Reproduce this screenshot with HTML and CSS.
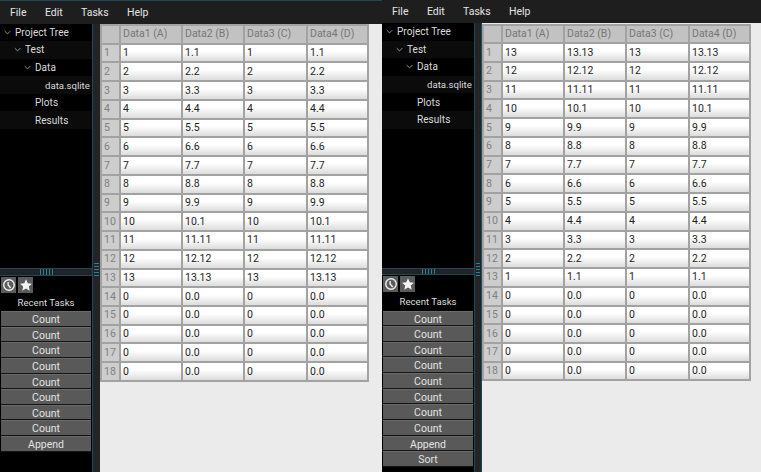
FILE: index.html
```html
<!DOCTYPE html>
<html lang="en">
<head>
<meta charset="utf-8">
<title>Tasks</title>
<link rel="stylesheet" href="styles.css">
</head>
<body>
<div class="desktop">
  <section class="win win-a">
    <nav class="menu"><span>File</span><span>Edit</span><span>Tasks</span><span>Help</span></nav>
    <div class="body">
      <aside class="side">
        <ul class="tree">
          <li class="l0"><svg class="chev" viewBox="0 0 10 6"><path d="M1 1l4 4 4-4"/></svg>Project Tree</li>
          <li class="l1 alt"><svg class="chev" viewBox="0 0 10 6"><path d="M1 1l4 4 4-4"/></svg>Test</li>
          <li class="l2"><svg class="chev" viewBox="0 0 10 6"><path d="M1 1l4 4 4-4"/></svg>Data</li>
          <li class="l3 alt">data.sqlite</li>
          <li class="l4">Plots</li>
          <li class="l4 alt">Results</li>
        </ul>
        <div class="hsplit"><i></i><i></i><i></i><i></i><i></i></div>
        <div class="tabs">
          <span class="tab"><svg viewBox="0 0 16 16"><circle cx="8" cy="8" r="6"/><path d="M7 4.5V8l3 3.5"/></svg></span>
          <span class="tab"><svg viewBox="0 0 16 16"><path class="fill" d="M8 1.5l2 4.500 4.800.5-3.600 3.200 1 4.800L8 12.100 3.800 14.500l1-4.800L1.200 6.500 6 6z"/></svg></span>
        </div>
        <h2 class="recent">Recent Tasks</h2>
        <div class="tasks">
          <button>Count</button><button>Count</button><button>Count</button><button>Count</button><button>Count</button><button>Count</button><button>Count</button><button>Count</button><button>Append</button>
        </div>
      </aside>
      <div class="vsplit"><i></i><i></i><i></i><i></i><i></i></div>
      <div class="sheet">
        <div class="grid">
          <div class="corner"></div><div class="ch">Data1 (A)</div><div class="ch">Data2 (B)</div><div class="ch">Data3 (C)</div><div class="ch">Data4 (D)</div>
          <div class="rh">1</div><div class="c">1</div><div class="c">1.1</div><div class="c">1</div><div class="c">1.1</div>
          <div class="rh">2</div><div class="c">2</div><div class="c">2.2</div><div class="c">2</div><div class="c">2.2</div>
          <div class="rh">3</div><div class="c">3</div><div class="c">3.3</div><div class="c">3</div><div class="c">3.3</div>
          <div class="rh">4</div><div class="c">4</div><div class="c">4.4</div><div class="c">4</div><div class="c">4.4</div>
          <div class="rh">5</div><div class="c">5</div><div class="c">5.5</div><div class="c">5</div><div class="c">5.5</div>
          <div class="rh">6</div><div class="c">6</div><div class="c">6.6</div><div class="c">6</div><div class="c">6.6</div>
          <div class="rh">7</div><div class="c">7</div><div class="c">7.7</div><div class="c">7</div><div class="c">7.7</div>
          <div class="rh">8</div><div class="c">8</div><div class="c">8.8</div><div class="c">8</div><div class="c">8.8</div>
          <div class="rh">9</div><div class="c">9</div><div class="c">9.9</div><div class="c">9</div><div class="c">9.9</div>
          <div class="rh">10</div><div class="c">10</div><div class="c">10.1</div><div class="c">10</div><div class="c">10.1</div>
          <div class="rh">11</div><div class="c">11</div><div class="c">11.11</div><div class="c">11</div><div class="c">11.11</div>
          <div class="rh">12</div><div class="c">12</div><div class="c">12.12</div><div class="c">12</div><div class="c">12.12</div>
          <div class="rh">13</div><div class="c">13</div><div class="c">13.13</div><div class="c">13</div><div class="c">13.13</div>
          <div class="rh">14</div><div class="c">0</div><div class="c">0.0</div><div class="c">0</div><div class="c">0.0</div>
          <div class="rh">15</div><div class="c">0</div><div class="c">0.0</div><div class="c">0</div><div class="c">0.0</div>
          <div class="rh">16</div><div class="c">0</div><div class="c">0.0</div><div class="c">0</div><div class="c">0.0</div>
          <div class="rh">17</div><div class="c">0</div><div class="c">0.0</div><div class="c">0</div><div class="c">0.0</div>
          <div class="rh">18</div><div class="c">0</div><div class="c">0.0</div><div class="c">0</div><div class="c">0.0</div>
        </div>
      </div>
    </div>
  </section>
  <section class="win win-b">
    <nav class="menu"><span>File</span><span>Edit</span><span>Tasks</span><span>Help</span></nav>
    <div class="body">
      <aside class="side">
        <ul class="tree">
          <li class="l0"><svg class="chev" viewBox="0 0 10 6"><path d="M1 1l4 4 4-4"/></svg>Project Tree</li>
          <li class="l1 alt"><svg class="chev" viewBox="0 0 10 6"><path d="M1 1l4 4 4-4"/></svg>Test</li>
          <li class="l2"><svg class="chev" viewBox="0 0 10 6"><path d="M1 1l4 4 4-4"/></svg>Data</li>
          <li class="l3 alt">data.sqlite</li>
          <li class="l4">Plots</li>
          <li class="l4 alt">Results</li>
        </ul>
        <div class="hsplit"><i></i><i></i><i></i><i></i><i></i></div>
        <div class="tabs">
          <span class="tab"><svg viewBox="0 0 16 16"><circle cx="8" cy="8" r="6"/><path d="M7 4.5V8l3 3.5"/></svg></span>
          <span class="tab"><svg viewBox="0 0 16 16"><path class="fill" d="M8 1.5l2 4.500 4.800.5-3.600 3.200 1 4.800L8 12.100 3.800 14.500l1-4.800L1.200 6.500 6 6z"/></svg></span>
        </div>
        <h2 class="recent">Recent Tasks</h2>
        <div class="tasks">
          <button>Count</button><button>Count</button><button>Count</button><button>Count</button><button>Count</button><button>Count</button><button>Count</button><button>Count</button><button>Append</button><button>Sort</button>
        </div>
      </aside>
      <div class="vsplit"><i></i><i></i><i></i><i></i><i></i></div>
      <div class="sheet">
        <div class="grid">
          <div class="corner"></div><div class="ch">Data1 (A)</div><div class="ch">Data2 (B)</div><div class="ch">Data3 (C)</div><div class="ch">Data4 (D)</div>
          <div class="rh">1</div><div class="c">13</div><div class="c">13.13</div><div class="c">13</div><div class="c">13.13</div>
          <div class="rh">2</div><div class="c">12</div><div class="c">12.12</div><div class="c">12</div><div class="c">12.12</div>
          <div class="rh">3</div><div class="c">11</div><div class="c">11.11</div><div class="c">11</div><div class="c">11.11</div>
          <div class="rh">4</div><div class="c">10</div><div class="c">10.1</div><div class="c">10</div><div class="c">10.1</div>
          <div class="rh">5</div><div class="c">9</div><div class="c">9.9</div><div class="c">9</div><div class="c">9.9</div>
          <div class="rh">6</div><div class="c">8</div><div class="c">8.8</div><div class="c">8</div><div class="c">8.8</div>
          <div class="rh">7</div><div class="c">7</div><div class="c">7.7</div><div class="c">7</div><div class="c">7.7</div>
          <div class="rh">8</div><div class="c">6</div><div class="c">6.6</div><div class="c">6</div><div class="c">6.6</div>
          <div class="rh">9</div><div class="c">5</div><div class="c">5.5</div><div class="c">5</div><div class="c">5.5</div>
          <div class="rh">10</div><div class="c">4</div><div class="c">4.4</div><div class="c">4</div><div class="c">4.4</div>
          <div class="rh">11</div><div class="c">3</div><div class="c">3.3</div><div class="c">3</div><div class="c">3.3</div>
          <div class="rh">12</div><div class="c">2</div><div class="c">2.2</div><div class="c">2</div><div class="c">2.2</div>
          <div class="rh">13</div><div class="c">1</div><div class="c">1.1</div><div class="c">1</div><div class="c">1.1</div>
          <div class="rh">14</div><div class="c">0</div><div class="c">0.0</div><div class="c">0</div><div class="c">0.0</div>
          <div class="rh">15</div><div class="c">0</div><div class="c">0.0</div><div class="c">0</div><div class="c">0.0</div>
          <div class="rh">16</div><div class="c">0</div><div class="c">0.0</div><div class="c">0</div><div class="c">0.0</div>
          <div class="rh">17</div><div class="c">0</div><div class="c">0.0</div><div class="c">0</div><div class="c">0.0</div>
          <div class="rh">18</div><div class="c">0</div><div class="c">0.0</div><div class="c">0</div><div class="c">0.0</div>
        </div>
      </div>
    </div>
  </section>
</div>
</body>
</html>
```
FILE: styles.css
```css
* { box-sizing: border-box; }
html, body { margin: 0; height: 100%; overflow: hidden; }
body { background: #ebebeb; font-family: Roboto, "Liberation Sans", sans-serif; font-size: 10.5px; }

.desktop { display: grid; grid-template-columns: 382px 379px; height: 472px; }
.win { display: flex; flex-direction: column; height: 472px; min-width: 0; }
.win-a { border-top: 1px solid #1d4756; }

.menu { height: 22.5px; flex: none; display: flex; align-items: center; padding-left: 10px; background: #1e1e1e; color: #e4e4e4; }
.menu span:nth-child(1) { width: 35px; }
.menu span:nth-child(2) { width: 36px; }
.menu span:nth-child(3) { width: 46px; }
.win-b .menu { height: 23px; }

.body { flex: 1; display: flex; min-height: 0; }

.side { width: 92px; flex: none; display: flex; flex-direction: column; background: #000; color: #dcdcdc; }
.tree { list-style: none; margin: 0; padding: 0; height: 244.5px; flex: none; font-size: 10px; letter-spacing: 0.05px; }
.tree li { height: 17.6px; display: flex; align-items: center; white-space: nowrap; }
.tree li.alt { background: #0b0b0b; }
.chev { width: 7px; height: 5px; margin-right: 4px; fill: none; stroke: #cfcfcf; stroke-width: 1; flex: none; }
.l0 { padding-left: 4px; }
.l1 { padding-left: 14px; }
.l2 { padding-left: 24px; }
.tree .l3 { padding-left: 45px; font-size: 9.6px; letter-spacing: 0; }
.l4 { padding-left: 35px; }

.hsplit { height: 7.5px; flex: none; display: flex; justify-content: center; align-items: stretch; gap: 2px; background: #232323; border-top: 1px solid #1d4a5a; border-bottom: 1px solid #1d4a5a; }
.hsplit i { width: 1px; background: #2b7f97; }

.tabs { display: flex; gap: 2px; padding: 1px 1px 0; flex: none; }
.tab { width: 15px; height: 16px; background: #5b5b5b; display: flex; align-items: center; justify-content: center; }
.tab svg { width: 14px; height: 14px; fill: none; stroke: #f0f0f0; stroke-width: 1.6; }
.tab svg .fill { fill: #f4f4f4; stroke: none; }

.recent { margin: 0; height: 18.5px; font-weight: 400; font-size: 9.6px; text-align: center; line-height: 19px; color: #dedede; flex: none; }

.tasks { display: flex; flex-direction: column; gap: 0; padding: 0 1px; }
.tasks button { height: 15.65px; flex: none; font: inherit; color: #e2e2e2; background: #595959; border: 0; border-top: 1px solid #6a6a6a; border-bottom: 1px solid #141414; padding: 1px 0 0; }

.vsplit { width: 8px; flex: none; display: flex; flex-direction: column; justify-content: flex-end; gap: 2px; padding: 0 1px 196px; background: #242424; border-left: 1px solid #1d4a5a; }
.vsplit i { height: 1px; background: #2b7f97; }
.win-b .vsplit { border-right: 1px solid #1d4a5a; }

.sheet { flex: 1; min-width: 0; background: #ebebeb; }
.grid { display: grid; grid-template-columns: 19px 62px 62px 63px 61px; grid-auto-rows: 18.74px; width: 269px; margin-top: 0.5px; border-right: 2px solid #a2a2a2; border-bottom: 2px solid #a2a2a2; }
.corner, .ch, .rh, .c { display: flex; align-items: center; padding: 0 0 1px 2px; overflow: hidden; border-top: 2px solid #a2a2a2; border-left: 2px solid #a2a2a2; white-space: nowrap; }
.corner, .ch { background: #c2c2c2; color: #777; }
.rh { background: #cdcdcd; color: #808080; padding-left: 2px; }
.c { background: linear-gradient(#fff 40%, #dcdcdc); color: #1e1e1e; }
```
